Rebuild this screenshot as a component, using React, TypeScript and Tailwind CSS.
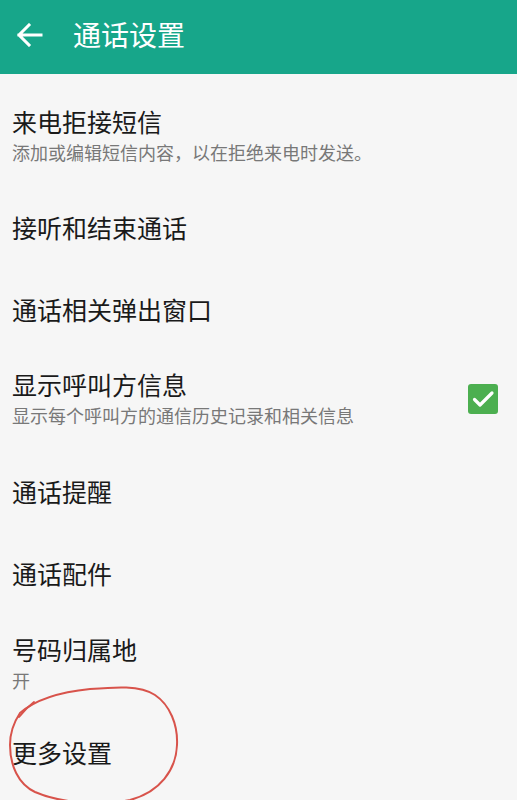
import React from 'react'

const font = { fontFamily: '"Noto Sans CJK SC", "Noto Sans", sans-serif' }

function Row({ title, sub, h, pt, checked }: { title: string; sub?: string; h: string; pt?: string; checked?: boolean }) {
  return (
    <div className={`flex items-center justify-between pl-3 pr-[19px] ${h} ${pt || ''}`}>
      <div className="flex flex-col">
        <div className="text-[25px] leading-[32px] text-[#1a1a1a]">{title}</div>
        {sub && <div className="text-[18px] leading-[30px] text-[#787878]">{sub}</div>}
      </div>
      {checked && (
        <div className="flex h-[30px] w-[30px] items-center justify-center rounded-[3px] bg-[#4caf50]">
          <svg width="24" height="24" viewBox="0 0 24 24" fill="none" stroke="white" strokeWidth="3.2" strokeLinecap="round" strokeLinejoin="round">
            <path d="M3.5 12.5l5.5 5.5L21 6" />
          </svg>
        </div>
      )}
    </div>
  )
}

export default function App() {
  return (
    <div className="relative h-[800px] w-full overflow-hidden bg-[#f6f6f6]" style={font}>
      <div className="flex h-[74px] items-center bg-[#17a68a] pb-[6px]">
        <svg className="ml-[16px] mt-[2px]" width="27" height="24" viewBox="0 0 27 24" fill="none" stroke="white" strokeWidth="3" strokeLinecap="square">
          <path d="M3 12h22M13 2L3 12l10 10" />
        </svg>
        <div className="ml-[30px] text-[28px] leading-none text-white">通话设置</div>
      </div>

      <Row title="来电拒接短信" sub="添加或编辑短信内容，以在拒绝来电时发送。" h="h-[112px]" pt="pt-[12px]" />
      <Row title="接听和结束通话" h="h-[82px]" />
      <Row title="通话相关弹出窗口" h="h-[81px]" />
      <Row title="显示呼叫方信息" sub="显示每个呼叫方的通信历史记录和相关信息" h="h-[100px]" checked />
      <Row title="通话提醒" h="h-[83px]" />
      <Row title="通话配件" h="h-[82px]" />
      <Row title="号码归属地" sub="开" h="h-[100px]" />
      <Row title="更多设置" h="h-[76px]" />

      <svg className="pointer-events-none absolute left-0 top-0" width="517" height="800" viewBox="0 0 517 800" fill="none" stroke="#d8534b" strokeWidth="2" strokeLinecap="round">
        <path d="M34 702 Q 26 708 19 717" />
        <path d="M20 713 C 35 700, 60 692, 90 689 C 115 687, 140 685, 155 695 C 170 705, 178 725, 177 745 C 176 770, 160 792, 130 800 C 100 806, 60 803, 35 792 C 18 784, 10 765, 10 745 C 10 732, 14 722, 20 713" />
      </svg>
    </div>
  )
}
